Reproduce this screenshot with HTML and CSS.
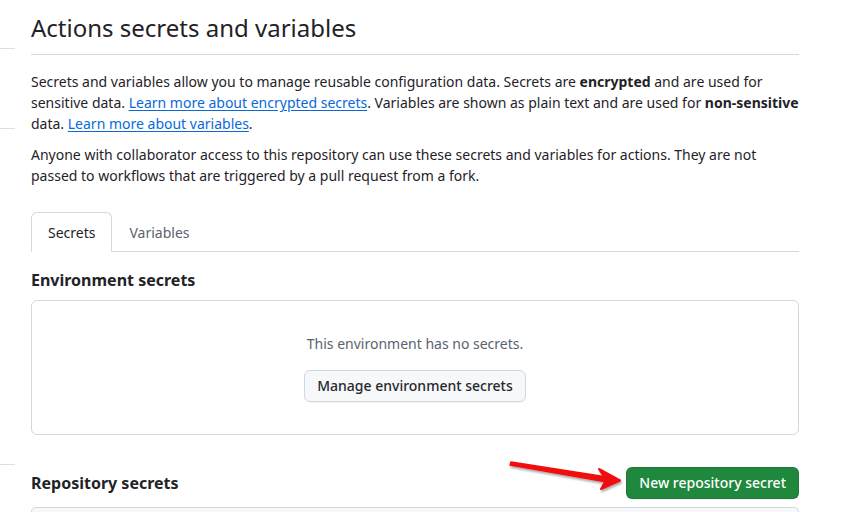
FILE: index.html
```html
<!DOCTYPE html>
<html>
<head>
<meta charset="utf-8">
<link rel="stylesheet" href="styles.css">
</head>
<body>
<div class="layout">
  <nav class="sidebar">
    <div class="side-item s1"></div>
    <div class="side-item s2"></div>
    <div class="side-item s3"></div>
  </nav>
  <main class="main">
    <div class="subhead">
      <h2 class="title">Actions secrets and variables</h2>
    </div>
    <p class="desc">Secrets and variables allow you to manage reusable configuration data. Secrets are <strong>encrypted</strong> and are used for sensitive data. <a href="#">Learn more about encrypted secrets</a>. Variables are shown as plain text and are used for <strong>non-sensitive</strong> data. <a href="#">Learn more about variables</a>.</p>
    <p class="desc">Anyone with collaborator access to this repository can use these secrets and variables for actions. They are not passed to workflows that are triggered by a pull request from a fork.</p>
    <div class="tabs">
      <div class="tab selected">Secrets</div>
      <div class="tab">Variables</div>
    </div>
    <h3 class="section-title">Environment secrets</h3>
    <div class="blank">
      <p class="blank-text">This environment has no secrets.</p>
      <button class="btn">Manage environment secrets</button>
    </div>
    <div class="section-row">
      <h3 class="section-title inline">Repository secrets</h3>
      <div class="btn-wrap">
        <button class="btn btn-primary">New repository secret</button>
        <svg class="arrow" width="130" height="40" viewBox="0 0 130 40">
          <defs>
            <filter id="sh" x="-20%" y="-50%" width="140%" height="200%">
              <feDropShadow dx="1" dy="2" stdDeviation="1.2" flood-color="#000" flood-opacity="0.35"/>
            </filter>
          </defs>
          <g filter="url(#sh)">
            <path d="M4 7 L100 22 L100 27 L3 10 Z" fill="#f01010" stroke="#f01010" stroke-width="1.5" stroke-linejoin="round"/>
            <path d="M92 14 L113 25.5 L94 34 L99 25 Z" fill="#f01010" stroke="#f01010" stroke-width="2" stroke-linejoin="round"/>
          </g>
        </svg>
      </div>
    </div>
    <div class="list-box"></div>
  </main>
</div>
</body>
</html>
```

FILE: styles.css
```css
* { box-sizing: border-box; }
html, body { margin: 0; padding: 0; background: #fff; }
body {
  font-family: "Noto Sans", "Liberation Sans", sans-serif;
  font-size: 14px;
  line-height: 1.5;
  color: #1f2328;
  overflow: hidden;
  height: 512px;
}
.layout {
  display: flex;
  gap: 16px;
}
.sidebar {
  width: 15px;
  flex: none;
  display: flex;
  flex-direction: column;
}
.side-item { border-bottom: 1px solid #d8dee4; }
.s1 { height: 49px; }
.s2 { height: 80px; }
.s3 { height: 336px; }
.main {
  width: 768px;
  flex: none;
  padding-top: 10px;
}
.subhead {
  padding-bottom: 8px;
  border-bottom: 1px solid #d1d9e0;
  margin-bottom: 16px;
}
.title {
  margin: 0;
  font-size: 24px;
  font-weight: 400;
  line-height: 36px;
}
.desc {
  margin: 0 0 10px;
  line-height: 21px;
}
.desc a {
  color: #0969da;
  text-decoration: underline;
  text-underline-offset: 2px;
}
.desc strong { font-weight: 700; }
.tabs {
  margin-top: 26px;
  display: flex;
  border-bottom: 1px solid #d1d9e0;
  height: 40px;
}
.tab {
  padding: 8px 16px;
  line-height: 21px;
  height: 40px;
  color: #59636e;
  border: 1px solid transparent;
  border-radius: 6px 6px 0 0;
  display: flex;
  align-items: center;
}
.tab.selected {
  color: #1f2328;
  border-color: #d1d9e0;
  border-bottom-color: #fff;
  background: #fff;
  height: 40px;
  margin-bottom: -1px;
}
.section-title {
  margin: 16px 0 8px;
  font-size: 16px;
  font-weight: 700;
  line-height: 24px;
}
.blank {
  border: 1px solid #d1d9e0;
  border-radius: 6px;
  padding: 32px;
  display: flex;
  flex-direction: column;
  align-items: center;
}
.blank-text {
  margin: 0 0 16px;
  color: #59636e;
  line-height: 21px;
}
.btn {
  font-family: inherit;
  font-size: 14px;
  font-weight: 500;
  line-height: 20px;
  height: 32px;
  padding: 0 12px;
  color: #25292e;
  background: #f6f8fa;
  border: 1px solid #d1d9e0;
  border-radius: 6px;
  box-shadow: 0 1px 0 rgba(31,35,40,0.04);
}
.section-row {
  margin-top: 32px;
  margin-bottom: 8px;
  display: flex;
  align-items: center;
  justify-content: space-between;
}
.section-title.inline { margin: 0; }
.btn-wrap { position: relative; }
.btn-primary {
  background: #1f883d;
  border-color: rgba(31,35,40,0.15);
  color: #fff;
  padding: 0 12px;
}
.arrow {
  position: absolute;
  left: -119px;
  top: -12px;
  pointer-events: none;
}
.list-box {
  height: 5px;
  border: 1px solid #d1d9e0;
  border-bottom: none;
  border-radius: 6px 6px 0 0;
  background: #f6f8fa;
}
```
